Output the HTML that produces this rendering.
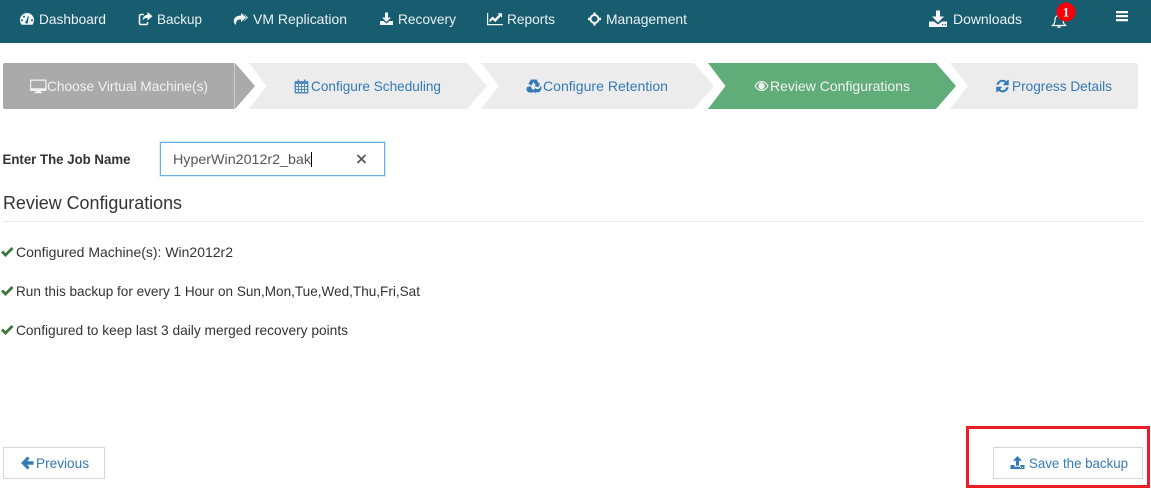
<!DOCTYPE html>
<html lang="en">
<head>
<meta charset="utf-8">
<title>Review Configurations</title>
<style>
html,body{margin:0;padding:0;background:#fff;width:1151px;height:494px;overflow:hidden}
svg{display:block}
text{font-family:"Liberation Sans",sans-serif;font-size:14px}
.n{fill:#eaf1f3}
.l{fill:#337ab7}
.w{fill:#f2f2f2}
.d{fill:#333}
</style>
</head>
<body>
<svg width="1151" height="494" viewBox="0 0 1151 494" xmlns="http://www.w3.org/2000/svg">
<!-- nav -->
<rect width="1151" height="43" fill="#185d6f"/>
<!-- dashboard icon -->
<path fill="#f4f6f7" fill-rule="evenodd" d="M27 13a7 7 0 0 0-7 7c0 1.800.6 3.400 1.600 4.800h10.800C33.400 23.400 34 21.800 34 20a7 7 0 0 0-7-7zM27.800 21.600a1.300 1.300 0 1 1-1.600-.6L28 16.200l1 .4zM22 21.200a1 1 0 1 1 0-2 1 1 0 0 1 0 2zM24 17.600a1 1 0 1 1 0-2 1 1 0 0 1 0 2zM32 21.200a1 1 0 1 1 0-2 1 1 0 0 1 0 2z"/>
<text class="n" x="39" y="24" textLength="67" lengthAdjust="spacingAndGlyphs">Dashboard</text>
<!-- backup icon -->
<path fill="none" stroke="#f4f6f7" stroke-width="1.500" d="M147.500 22v1.200a1.300 1.300 0 0 1-1.300 1.300h-5.400a1.300 1.300 0 0 1-1.300-1.300v-7.400a1.300 1.300 0 0 1 1.300-1.300h3"/>
<path fill="#f4f6f7" d="M147.500 12l5 4.200-5 4.300v-2.500c-2.400 0-4 .6-4.800 2.800-.2-3.500 1.800-5.800 4.800-6.200z"/>
<text class="n" x="157" y="24" textLength="45" lengthAdjust="spacingAndGlyphs">Backup</text>
<!-- replication icon -->
<path fill="#f4f6f7" d="M241 13l5 4.500-5 4.500v-2.600c-3 0-5 .8-5.200 5.600-1.700-1.400-2.200-3-1.900-4.800.5-3.300 3.400-4.600 7.100-4.600z"/>
<path fill="#f4f6f7" d="M243 13l5 4.500-5 4.500 3.500-4.500z"/>
<text class="n" x="253" y="24" textLength="94" lengthAdjust="spacingAndGlyphs">VM Replication</text>
<!-- recovery icon -->
<path fill="#f4f6f7" d="M385 12.500h3v5h3l-4.500 4.500-4.500-4.500h3zM380 21h3.500l3 2.500 3-2.500h3.500v4h-13z"/>
<text class="n" x="398" y="24" textLength="58" lengthAdjust="spacingAndGlyphs">Recovery</text>
<!-- reports icon -->
<path fill="none" stroke="#f4f6f7" stroke-width="1.200" d="M487.600 13v11.600H503"/>
<path fill="#f4f6f7" d="M489.500 22.500v-2.700l3-3.300 2.600 2.300 3.900-4.300-1.500-1.300h4.500v4.500l-1.400-1.500-5.300 5.900-2.700-2.500z"/>
<text class="n" x="507" y="24" textLength="48" lengthAdjust="spacingAndGlyphs">Reports</text>
<!-- management icon -->
<circle cx="594.500" cy="19" r="4" fill="none" stroke="#f4f6f7" stroke-width="2"/>
<path fill="#f4f6f7" d="M593.300 12.500h2.400v3.500h-2.400zM593.300 22h2.400v3.500h-2.400zM588 17.800h3.500v2.400H588zM597.500 17.800h3.500v2.400h-3.500z"/>
<text class="n" x="606" y="24" textLength="81" lengthAdjust="spacingAndGlyphs">Management</text>
<!-- downloads icon -->
<path fill="#f4f6f7" d="M936 10.500h4v6h4l-6 6-6-6h4z"/>
<path fill="#f4f6f7" fill-rule="evenodd" d="M929 21.500h5l4 3 4-3h5V27h-18zM942 24v1.300h1.300V24zM944.700 24v1.300H946V24z"/>
<text class="n" x="953" y="24" textLength="69" lengthAdjust="spacingAndGlyphs">Downloads</text>
<!-- bell -->
<path fill="none" stroke="#f4f6f7" stroke-width="1.200" d="M1059 15.500c-2.500 0-4 1.800-4 4.200 0 2.700-1 4.600-2.500 5.800h13c-1.500-1.200-2.500-3.100-2.500-5.800 0-2.400-1.500-4.200-4-4.200z"/>
<path fill="#f4f6f7" d="M1057 26.500h4c0 1-.9 1.500-2 1.500s-2-.5-2-1.500z"/>
<circle cx="1066" cy="12" r="9.500" fill="#f90008"/>
<text x="1066" y="16.500" text-anchor="middle" fill="#fff" style="font-family:'Liberation Serif',serif;font-size:13px;font-weight:700">1</text>
<!-- hamburger -->
<path fill="#fff" d="M1116 11h12v2.300h-12zM1116 15h12v2.300h-12zM1116 19h12v2.300h-12z"/>

<!-- steps -->
<path fill="#aaa" d="M5 63h230l20 23-20 23H5a2 2 0 0 1-2-2V65a2 2 0 0 1 2-2z"/>
<path fill="#c9cfcc" d="M234 63h1v46h-1z"/>
<path fill="#ececec" d="M249 63h218l20 23-20 23H249l17.500-23z"/>
<path fill="#ececec" d="M481 63h213l20 23-20 23H481l18-23z"/>
<path fill="#60ad7a" d="M708 63h228l20 23-20 23H708l17.500-23z"/>
<path fill="#ececec" d="M950 63h186a2 2 0 0 1 2 2v42a2 2 0 0 1-2 2H950l18-23z"/>

<!-- monitor -->
<path fill="#f2f2f2" fill-rule="evenodd" d="M31 79.500h14.500a1 1 0 0 1 1 1V90a1 1 0 0 1-1 1h-4.700l.5 1.500h1v.8h-8.100v-.8h1l.5-1.500H31a1 1 0 0 1-1-1v-9.500a1 1 0 0 1 1-1zM31.200 80.800v7.400h14.100v-7.400z"/>
<text class="w" x="47" y="91" textLength="161" lengthAdjust="spacingAndGlyphs">Choose Virtual Machine(s)</text>
<!-- calendar -->
<path fill="#337ab7" fill-rule="evenodd" d="M295.500 81h2v-1.500h1.500V81h5v-1.500h1.500V81h2a.9.900 0 0 1 .9.900v10.700a.9.900 0 0 1-.9.900h-12a.9.900 0 0 1-.9-.900V81.900a.9.900 0 0 1 .9-.900zM296 84v2h2v-2zM299 84v2h2v-2zM302 84v2h2v-2zM305 84v2h2v-2zM296 87v2h2v-2zM299 87v2h2v-2zM302 87v2h2v-2zM305 87v2h2v-2zM296 90v2h2v-2zM299 90v2h2v-2zM302 90v2h2v-2zM305 90v2h2v-2z" opacity=".85"/>
<text class="l" x="311" y="91" textLength="130" lengthAdjust="spacingAndGlyphs">Configure Scheduling</text>
<!-- recycle -->
<path fill="#337ab7" d="M531 79.500h5.500l2.300 4 1.300-.8-1.500 4.300-4.300-.8 1.300-.8-2-3.400-2.300 3.600-2.900-1.700zM527.200 87l3.300-.9 1.900 3.400h1.300v3h-4.200c-1 0-1.700-.5-2.200-1.300l-.7-1.200c-.3-.6-.3-1.400.1-2zM541 85.800l.4 1.600c.2.800.1 1.400-.3 2.100l-1 1.800c-.4.700-1.100 1-2 1h-2.300v1.300l-2.800-3 2.800-3v1.400h3.200z"/>
<text class="l" x="543" y="91" textLength="125" lengthAdjust="spacingAndGlyphs">Configure Retention</text>
<!-- eye -->
<path fill="#f2f2f2" fill-rule="evenodd" d="M761.500 81c3 0 5.500 2 7 5-1.500 3-4 5-7 5s-5.500-2-7-5c1.500-3 4-5 7-5zM761.500 82.200a6.700 6.700 0 0 0-5.700 3.800 6.700 6.700 0 0 0 5.700 3.800 6.700 6.700 0 0 0 5.700-3.800 6.700 6.700 0 0 0-5.700-3.800zM761.500 82.800a3.200 3.200 0 1 1 0 6.400 3.200 3.200 0 0 1 0-6.400z"/>
<text class="w" x="770" y="91" textLength="140" lengthAdjust="spacingAndGlyphs">Review Configurations</text>
<!-- refresh -->
<path fill="#337ab7" stroke="#337ab7" stroke-width=".5" d="M1002.500 80a6 6 0 0 1 4 1.500l1.500-1.500h.5v5h-5v-.5l1.800-1.800a3.900 3.900 0 0 0-6.700 1.800h-2a6 6 0 0 1 5.900-4.500zM996.500 87h5v.5l-1.800 1.800a3.900 3.900 0 0 0 6.700-1.800h2a6 6 0 0 1-9.900 3l-1.500 1.500h-.5z"/>
<text class="l" x="1012" y="91" textLength="100" lengthAdjust="spacingAndGlyphs">Progress Details</text>

<!-- job name -->
<text x="2.500" y="164" textLength="128" lengthAdjust="spacingAndGlyphs" fill="#333" font-weight="700">Enter The Job Name</text>
<rect x="159.500" y="141.500" width="226" height="35" fill="none" stroke="#66afe9" stroke-opacity=".25"/>
<rect x="160.500" y="142.500" width="224" height="33" fill="#fff" stroke="#66afe9"/>
<text x="173" y="164" textLength="138" lengthAdjust="spacingAndGlyphs" fill="#555">HyperWin2012r2_bak</text>
<rect x="311" y="152" width="1" height="15" fill="#000"/>
<path stroke="#555" stroke-width="1.700" fill="none" d="M357.500 155l8 8M365.500 155l-8 8"/>

<!-- heading -->
<text x="3" y="209" textLength="179" lengthAdjust="spacingAndGlyphs" fill="#333" style="font-size:18px">Review Configurations</text>
<rect x="3" y="221" width="1140" height="1" fill="#eaeaea"/>

<!-- list -->
<path fill="#3c763d" d="M1 252.500l2-2 2.500 2.500 6-6 2 2-8 8z"/>
<text class="d" x="16" y="257" textLength="217" lengthAdjust="spacingAndGlyphs">Configured Machine(s): Win2012r2</text>
<path fill="#3c763d" d="M1 291.500l2-2 2.500 2.500 6-6 2 2-8 8z"/>
<text class="d" x="16" y="296" textLength="404" lengthAdjust="spacingAndGlyphs">Run this backup for every 1 Hour on Sun,Mon,Tue,Wed,Thu,Fri,Sat</text>
<path fill="#3c763d" d="M1 330.500l2-2 2.500 2.500 6-6 2 2-8 8z"/>
<text class="d" x="16" y="335" textLength="332" lengthAdjust="spacingAndGlyphs">Configured to keep last 3 daily merged recovery points</text>

<!-- previous -->
<rect x="3.500" y="447.500" width="101" height="31" fill="#fff" stroke="#d5d5d5"/>
<path fill="#337ab7" d="M27.500 456.500l2 2-2.200 2.800H33.500v3.400h-6.200l2.200 2.800-2 2-6.500-6.500z"/>
<text class="l" x="36" y="468" textLength="53" lengthAdjust="spacingAndGlyphs">Previous</text>

<!-- save -->
<rect x="993.500" y="447.500" width="149" height="31" fill="#fff" stroke="#d5d5d5"/>
<path fill="#337ab7" fill-rule="evenodd" d="M1017.500 456l4.500 4.700h-3v5h-3v-5h-3zM1010.500 465h4v1.800h6V465h4v4h-14zM1020 467v1h1v-1zM1022 467v1h1v-1z"/>
<text class="l" x="1029" y="468" textLength="99" lengthAdjust="spacingAndGlyphs">Save the backup</text>

<!-- highlight -->
<rect x="967.500" y="427.500" width="181" height="59" fill="none" stroke="#ed1c24" stroke-width="3"/>
</svg>
</body>
</html>
